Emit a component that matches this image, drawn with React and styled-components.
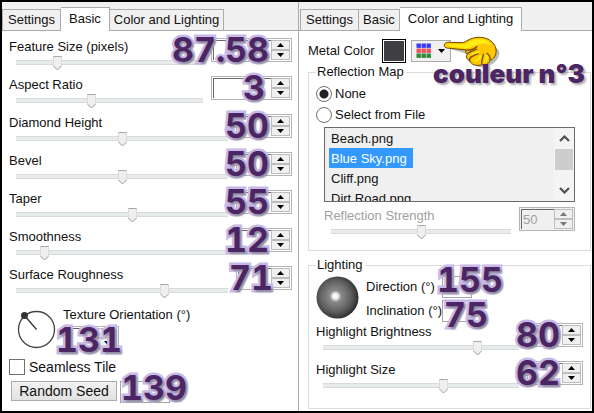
import styled, { createGlobalStyle, css } from "styled-components";

const COLORS = {
  strip: "#f0f0f0",
  line: "#acacac",
  groupLine: "#dcdcdc",
  text: "#111111",
  disabled: "#a0a0a0",
  select: "#3399ff",
  note: "#4b2564",
  noteEdge: "#c8bae8",
};

const svgUrl = (body) =>
  `url("data:image/svg+xml,${encodeURIComponent(
    `<svg xmlns='http://www.w3.org/2000/svg' width='9' height='15' viewBox='0 0 9 15'>${body}</svg>`
  )}")`;
const THUMB = svgUrl(
  "<path d='M.5 .5h8v9.5l-4 4l-4-4z' fill='#efefef' stroke='#dadada'/><path d='M.5 .5h8M.5 10l4 4l4-4' fill='none' stroke='#a9a9a9'/>"
);

const GlobalStyle = createGlobalStyle`
  * { box-sizing: border-box; }
  body {
    margin: 0;
    background: #fff;
    color: ${COLORS.text};
    font: 13px/18px "Liberation Sans", Arial, sans-serif;
  }
  button, input { font: inherit; color: inherit; }
`;

const Frame = styled.main`
  display: grid;
  grid-template-columns: 297fr 293fr;
  min-height: 100vh;
  border: 2px solid #000;
`;
const Panel = styled.section`
  display: flex;
  flex-direction: column;
  min-width: 0;
  & + & > div:first-child {
    padding-left: 1px;
  }
  &:first-child {
    border-right: 1px solid ${COLORS.line};
  }
`;
const TabStrip = styled.div`
  display: flex;
  align-items: flex-end;
  height: 29px;
  background: ${COLORS.strip};
  border-bottom: 1px solid ${COLORS.line};
`;
const Tab = styled.button`
  height: 21px;
  padding: 0 4px;
  background: ${COLORS.strip};
  border: 1px solid ${COLORS.line};
  border-width: 1px 1px 0 0;
  line-height: 20px;
  white-space: nowrap;
  &:first-child {
    padding: 0 5px;
    border-left-width: 1px;
  }
  ${(p) =>
    p.$active &&
    css`
      height: 24px;
      padding: 0 8px 2px;
      margin-bottom: -1px;
      background: #fff;
    `}
`;
const Page = styled.div`
  flex: 1;
  background: #fff;
  padding: 7px 6px 0 7px;
`;
const ColorPage = styled(Page)`
  padding: 7px 1px 0 9px;
`;

const Row = styled.div`
  display: flex;
  gap: 8px;
  height: 38px;
  color: ${(p) => (p.$disabled ? COLORS.disabled : "inherit")};
`;
const SliderSide = styled.div`
  flex: 1;
  min-width: 0;
  display: flex;
  flex-direction: column;
`;
const Label = styled.label`
  height: 18px;
  white-space: nowrap;
`;
const Range = styled.input`
  appearance: none;
  height: 15px;
  margin: 0 0 0 7px;
  background: linear-gradient(#d9dbdb 1px, #e8ebeb 1px 4px, #d9dbdb 4px) 0 4px / 100% 5px no-repeat;
  &::-webkit-slider-thumb {
    appearance: none;
    width: 9px;
    height: 15px;
    background: ${THUMB};
  }
`;

const SpinBox = styled.div`
  position: relative;
  display: flex;
  width: ${(p) => (p.$wide ? 81 : 56)}px;
  height: 24px;
  padding: 1px;
  background: ${(p) => (p.$disabled ? COLORS.strip : "#fff")};
  border: 1px solid #b4b4b4;
`;
const Field = styled.input`
  flex: 1;
  min-width: 0;
  padding: 0 1px;
  background: transparent;
  border: 1px solid #696969;
  border-width: 1px 0 0 1px;
`;
const Arrows = styled.div`
  display: flex;
  flex-direction: column;
  width: 19px;
`;
const Arrow = styled.button`
  flex: 1;
  display: flex;
  align-items: center;
  justify-content: center;
  padding: 0;
  background: ${COLORS.strip};
  border: 1px solid #bdbdbd;
`;
const SmallField = styled.input`
  width: ${(p) => (p.$wide ? 50 : 30)}px;
  height: 22px;
  border: 1px solid #a5a5a5;
`;
const FieldWrap = styled.div`
  position: relative;
  display: flex;
`;

const Note = styled.span`
  position: absolute;
  top: ${(p) => p.$top || "50%"};
  right: ${(p) => (p.$right === undefined ? 22 : p.$right)}px;
  transform: translateY(-50%);
  color: ${COLORS.note};
  font-family: Inter, "Liberation Sans", sans-serif;
  font-size: 34px;
  font-weight: 700;
  font-variant-numeric: tabular-nums;
  line-height: 24px;
  white-space: nowrap;
  pointer-events: none;
  -webkit-text-stroke: 5px ${COLORS.noteEdge};
  paint-order: stroke fill;
  text-shadow: 2px 2px 2px #777777aa;
`;

const Orientation = styled.div`
  display: flex;
  gap: 7px;
  padding: 2px 0 8px 8px;
`;
const Dial = styled.svg`
  width: 39px;
  height: 39px;
  margin-top: 4px;
`;
const Stack = styled.div`
  display: flex;
  flex-direction: column;
  align-items: flex-start;
  gap: 2px;
`;
const CheckLine = styled.label`
  display: flex;
  align-items: center;
  gap: 4px;
  font-size: 14px;
`;
const Check = styled.input`
  appearance: none;
  width: 16px;
  height: 16px;
  margin: 0;
  background: #fff;
  border: 1px solid #707070;
`;
const SeedLine = styled.div`
  display: flex;
  gap: 3px;
  padding: 5px 0 0 2px;
`;
const SeedButton = styled.button`
  width: 106px;
  height: 20px;
  padding: 0;
  background: linear-gradient(#f2f2f2, #e2e2e2);
  border: 1px solid #acacac;
  font-size: 14px;
  line-height: 18px;
`;

const ColorLine = styled.div`
  display: flex;
  align-items: center;
  height: 25px;
`;
const ColorLabel = styled.span`
  width: 74px;
`;
const Swatch = styled.button`
  width: 24px;
  height: 24px;
  padding: 0;
  background: #3f3f43;
  border: 1px solid #000;
  box-shadow: inset 0 0 0 1px #fff;
`;
const PaletteButton = styled.button`
  position: relative;
  display: flex;
  align-items: center;
  justify-content: space-between;
  width: 40px;
  height: 22px;
  margin-left: 5px;
  padding: 0 5px 0 4px;
  background: ${COLORS.strip};
  border: 1px solid #acacac;
`;
const Hand = styled.svg`
  position: absolute;
  left: 28px;
  top: -6px;
  width: 62px;
  height: 34px;
`;
const ColorNote = styled.span`
  position: absolute;
  left: 21px;
  top: 18px;
  color: ${COLORS.note};
  font: 900 26px/30px Inter, "Liberation Sans", sans-serif;
  white-space: nowrap;
  text-shadow: 2px 2px 2px #77777799;
  z-index: 1;
`;

const Group = styled.fieldset`
  min-width: 0;
  margin: 0 0 5px;
  padding: 2px 7px 5px;
  border: 1px solid ${COLORS.groupLine};
`;
const Legend = styled.legend`
  height: 18px;
  padding: 0 2px 0 1px;
`;
const RadioLine = styled.label`
  display: flex;
  align-items: center;
  gap: 3px;
  height: 21px;
`;
const Radio = styled.input`
  appearance: none;
  width: 16px;
  height: 16px;
  margin: 0;
  border: 1px solid #707070;
  border-radius: 50%;
  &:checked {
    background: radial-gradient(circle, #222 0 4px, #fff 5px);
  }
`;
const ReflectionBody = styled.div`
  padding: 2px 8px 0;
`;
const ListBox = styled.div`
  display: flex;
  height: 75px;
  margin-bottom: 5px;
  background: ${COLORS.strip};
  border: 1px solid #6a6a6a;
`;
const List = styled.ul`
  flex: 1;
  margin: 0;
  padding: 0 4px;
  list-style: none;
  overflow: hidden;
`;
const Item = styled.li`
  width: fit-content;
  height: 20px;
  padding: 0 6px 0 2px;
  line-height: 21px;
  ${(p) =>
    p.$selected &&
    css`
      background: ${COLORS.select};
      color: #fff;
    `}
`;
const Scrollbar = styled.div`
  display: flex;
  flex-direction: column;
  align-items: center;
  width: 20px;
  padding: 7px 0;
  background: #f4f4f4;
`;
const ScrollThumb = styled.div`
  width: 18px;
  height: 21px;
  margin: 7px 0 auto;
  background: #cdcdcd;
`;

const AngleLine = styled.div`
  display: flex;
  gap: 7px;
  padding-bottom: 1px;
`;
const Sphere = styled.svg`
  width: 43px;
  height: 43px;
`;
const Angle = styled.div`
  display: grid;
  grid-template-columns: 76px auto;
  align-items: center;
`;
const LightingGroup = styled(Group)`
  margin: 0;
  padding-bottom: 9px;
`;

const Triangle = ({ up, fill = "#000" }) => (
  <svg width="7" height="4" viewBox="0 0 7 4">
    <path d={up ? "M0 4L3.5 0L7 4z" : "M0 0L3.5 4L7 0z"} fill={fill} />
  </svg>
);

const Chevron = ({ up }) => (
  <svg width="11" height="7" viewBox="0 0 11 7">
    <path d={up ? "M1 6L5.5 1.5L10 6" : "M1 1L5.5 5.5L10 1"} fill="none" stroke="#505050" strokeWidth="2.2" />
  </svg>
);

const Spinner = ({ id, name, value, note, noteRight, noteTop, wide, disabled }) => (
  <SpinBox $wide={wide} $disabled={disabled}>
    <Field id={id} aria-label={name} defaultValue={value} disabled={disabled} />
    <Arrows>
      <Arrow aria-label={`${name} up`} disabled={disabled}>
        <Triangle up fill={disabled ? "#777" : "#000"} />
      </Arrow>
      <Arrow aria-label={`${name} down`} disabled={disabled}>
        <Triangle fill={disabled ? "#777" : "#000"} />
      </Arrow>
    </Arrows>
    {note && (
      <Note $right={noteRight} $top={noteTop}>
        {note}
      </Note>
    )}
  </SpinBox>
);

const SliderRow = ({ id, name, pos, ...spin }) => (
  <Row $disabled={spin.disabled}>
    <SliderSide>
      <Label htmlFor={id}>{name}</Label>
      <Range id={id} type="range" defaultValue={pos} disabled={spin.disabled} />
    </SliderSide>
    <Spinner name={name} {...spin} />
  </Row>
);

const Tabs = ({ active }) => (
  <TabStrip role="tablist">
    {["Settings", "Basic", "Color and Lighting"].map((t) => (
      <Tab key={t} role="tab" aria-selected={t === active} $active={t === active}>
        {t}
      </Tab>
    ))}
  </TabStrip>
);

const basicRows = [
  { id: "feature", name: "Feature Size (pixels)", pos: 21, note: "87.58", wide: true },
  { id: "aspect", name: "Aspect Ratio", pos: 40, note: "3", wide: true, noteRight: 26 },
  { id: "diamond", name: "Diamond Height", pos: 50, note: "50" },
  { id: "bevel", name: "Bevel", pos: 50, note: "50" },
  { id: "taper", name: "Taper", pos: 55, note: "55" },
  { id: "smooth", name: "Smoothness", pos: 12, note: "12" },
  { id: "rough", name: "Surface Roughness", pos: 71, note: "71", noteRight: 18 },
];

const files = ["Beach.png", "Blue Sky.png", "Cliff.png", "Dirt Road.png"];
const palette = ["#3a3af0", "#f05060", "#2e8b3a"];

const PaletteIcon = () => (
  <svg width="16" height="16" viewBox="0 0 16 16">
    {palette.map((color, y) =>
      [0, 1, 2].map((x) => (
        <rect key={`${x}${y}`} x={x * 5 + 0.5} y={y * 5 + 0.5} width="4.4" height="4.4" fill={color} />
      ))
    )}
  </svg>
);

const PointingHand = () => (
  <Hand viewBox="0 0 186 102">
    <path d="M24 40L84 58C90 84 110 98 128 98C160 92 180 74 178 48L160 30z" fill="#555" opacity=".4" />
    <path
      d="M13 31C13 22 24 21 34 22L68 23C78 21 90 8 114 7C140 5 164 20 168 42C171 60 160 74 150 76C146 88 136 91 126 89C110 95 92 88 90 78C80 74 76 64 82 58C76 54 76 48 80 45L30 40C18 40 13 37 13 31Z"
      fill="#ffc800"
      stroke="#6b4a00"
      strokeWidth="3"
    />
    <path
      d="M19 29C30 27 50 29 72 28C88 24 92 13 114 12C134 11 148 20 154 30C140 24 130 24 118 28C100 30 92 40 78 40L32 35z"
      fill="#ffee10"
    />
    <path d="M96 56C104 58 112 54 116 50M104 76C112 78 120 70 122 62M132 80C142 76 142 66 138 60" fill="none" stroke="#ffee10" strokeWidth="6" />
    <path
      d="M80 45C94 46 104 42 112 34M82 58C84 50 96 50 112 42M90 78C84 68 98 62 116 56M126 89C122 76 130 70 130 56M150 76C152 66 146 58 140 54"
      fill="none"
      stroke="#7a4c00"
      strokeWidth="4"
    />
  </Hand>
);

const BasicPanel = () => (
  <Panel>
    <Tabs active="Basic" />
    <Page>
      {basicRows.map((row) => (
        <SliderRow key={row.id} {...row} />
      ))}
      <Orientation>
        <Dial viewBox="0 0 39 39">
          <circle cx="19.5" cy="19.5" r="18" fill="#fff" stroke="#444" strokeWidth="1.3" />
          <path d="M7.5 5.5L19.5 19.5" stroke="#333" strokeWidth="1.3" />
          <circle cx="7.5" cy="5.5" r="3.5" fill="#333" />
        </Dial>
        <Stack>
          <Label htmlFor="orientation">Texture Orientation (°)</Label>
          <Spinner id="orientation" name="Texture Orientation" note="131" noteRight={-4} noteTop="60%" />
        </Stack>
      </Orientation>
      <CheckLine>
        <Check type="checkbox" />
        Seamless Tile
      </CheckLine>
      <SeedLine>
        <SeedButton>Random Seed</SeedButton>
        <FieldWrap>
          <SmallField $wide aria-label="Seed" />
          <Note $right={-17} $top="30%">
            139
          </Note>
        </FieldWrap>
      </SeedLine>
    </Page>
  </Panel>
);

const ColorPanel = () => (
  <Panel>
    <Tabs active="Color and Lighting" />
    <ColorPage>
      <ColorLine>
        <ColorLabel>Metal Color</ColorLabel>
        <Swatch aria-label="Metal Color" />
        <PaletteButton aria-label="Palette">
          <PaletteIcon />
          <Triangle />
          <PointingHand />
          <ColorNote>couleur n°3</ColorNote>
        </PaletteButton>
      </ColorLine>
      <Group>
        <Legend>Reflection Map</Legend>
        <RadioLine>
          <Radio type="radio" name="map" defaultChecked />
          None
        </RadioLine>
        <RadioLine>
          <Radio type="radio" name="map" />
          Select from File
        </RadioLine>
        <ReflectionBody>
          <ListBox>
            <List role="listbox" aria-label="Reflection files">
              {files.map((f) => (
                <Item key={f} role="option" aria-selected={f === "Blue Sky.png"} $selected={f === "Blue Sky.png"}>
                  {f}
                </Item>
              ))}
            </List>
            <Scrollbar>
              <Chevron up />
              <ScrollThumb />
              <Chevron />
            </Scrollbar>
          </ListBox>
          <SliderRow id="strength" name="Reflection Strength" pos={50} value="50" disabled />
        </ReflectionBody>
      </Group>
      <LightingGroup>
        <Legend>Lighting</Legend>
        <AngleLine>
          <Sphere viewBox="0 0 43 43">
            <defs>
              <radialGradient id="ball" cx=".45" cy=".47" r=".55">
                <stop offset="0" stopColor="#fff" />
                <stop offset=".12" stopColor="#eee" />
                <stop offset=".25" stopColor="#8a8a8a" />
                <stop offset=".7" stopColor="#5c5c5c" />
                <stop offset="1" stopColor="#2c2c2c" />
              </radialGradient>
            </defs>
            <circle cx="21.5" cy="21.5" r="21" fill="url(#ball)" />
          </Sphere>
          <Stack>
            <Angle>
              <Label htmlFor="direction">Direction (°)</Label>
              <FieldWrap>
                <SmallField id="direction" />
                <Note $right={-31} $top="20%">
                  155
                </Note>
              </FieldWrap>
            </Angle>
            <Angle>
              <Label htmlFor="inclination">Inclination (°)</Label>
              <FieldWrap>
                <SmallField id="inclination" />
                <Note $right={-16} $top="70%">
                  75
                </Note>
              </FieldWrap>
            </Angle>
          </Stack>
        </AngleLine>
        <SliderRow id="bright" name="Highlight Brightness" pos={80} note="80" />
        <SliderRow id="size" name="Highlight Size" pos={62} note="62" />
      </LightingGroup>
    </ColorPage>
  </Panel>
);

const App = () => (
  <>
    <GlobalStyle />
    <Frame>
      <BasicPanel />
      <ColorPanel />
    </Frame>
  </>
);

export default App;
